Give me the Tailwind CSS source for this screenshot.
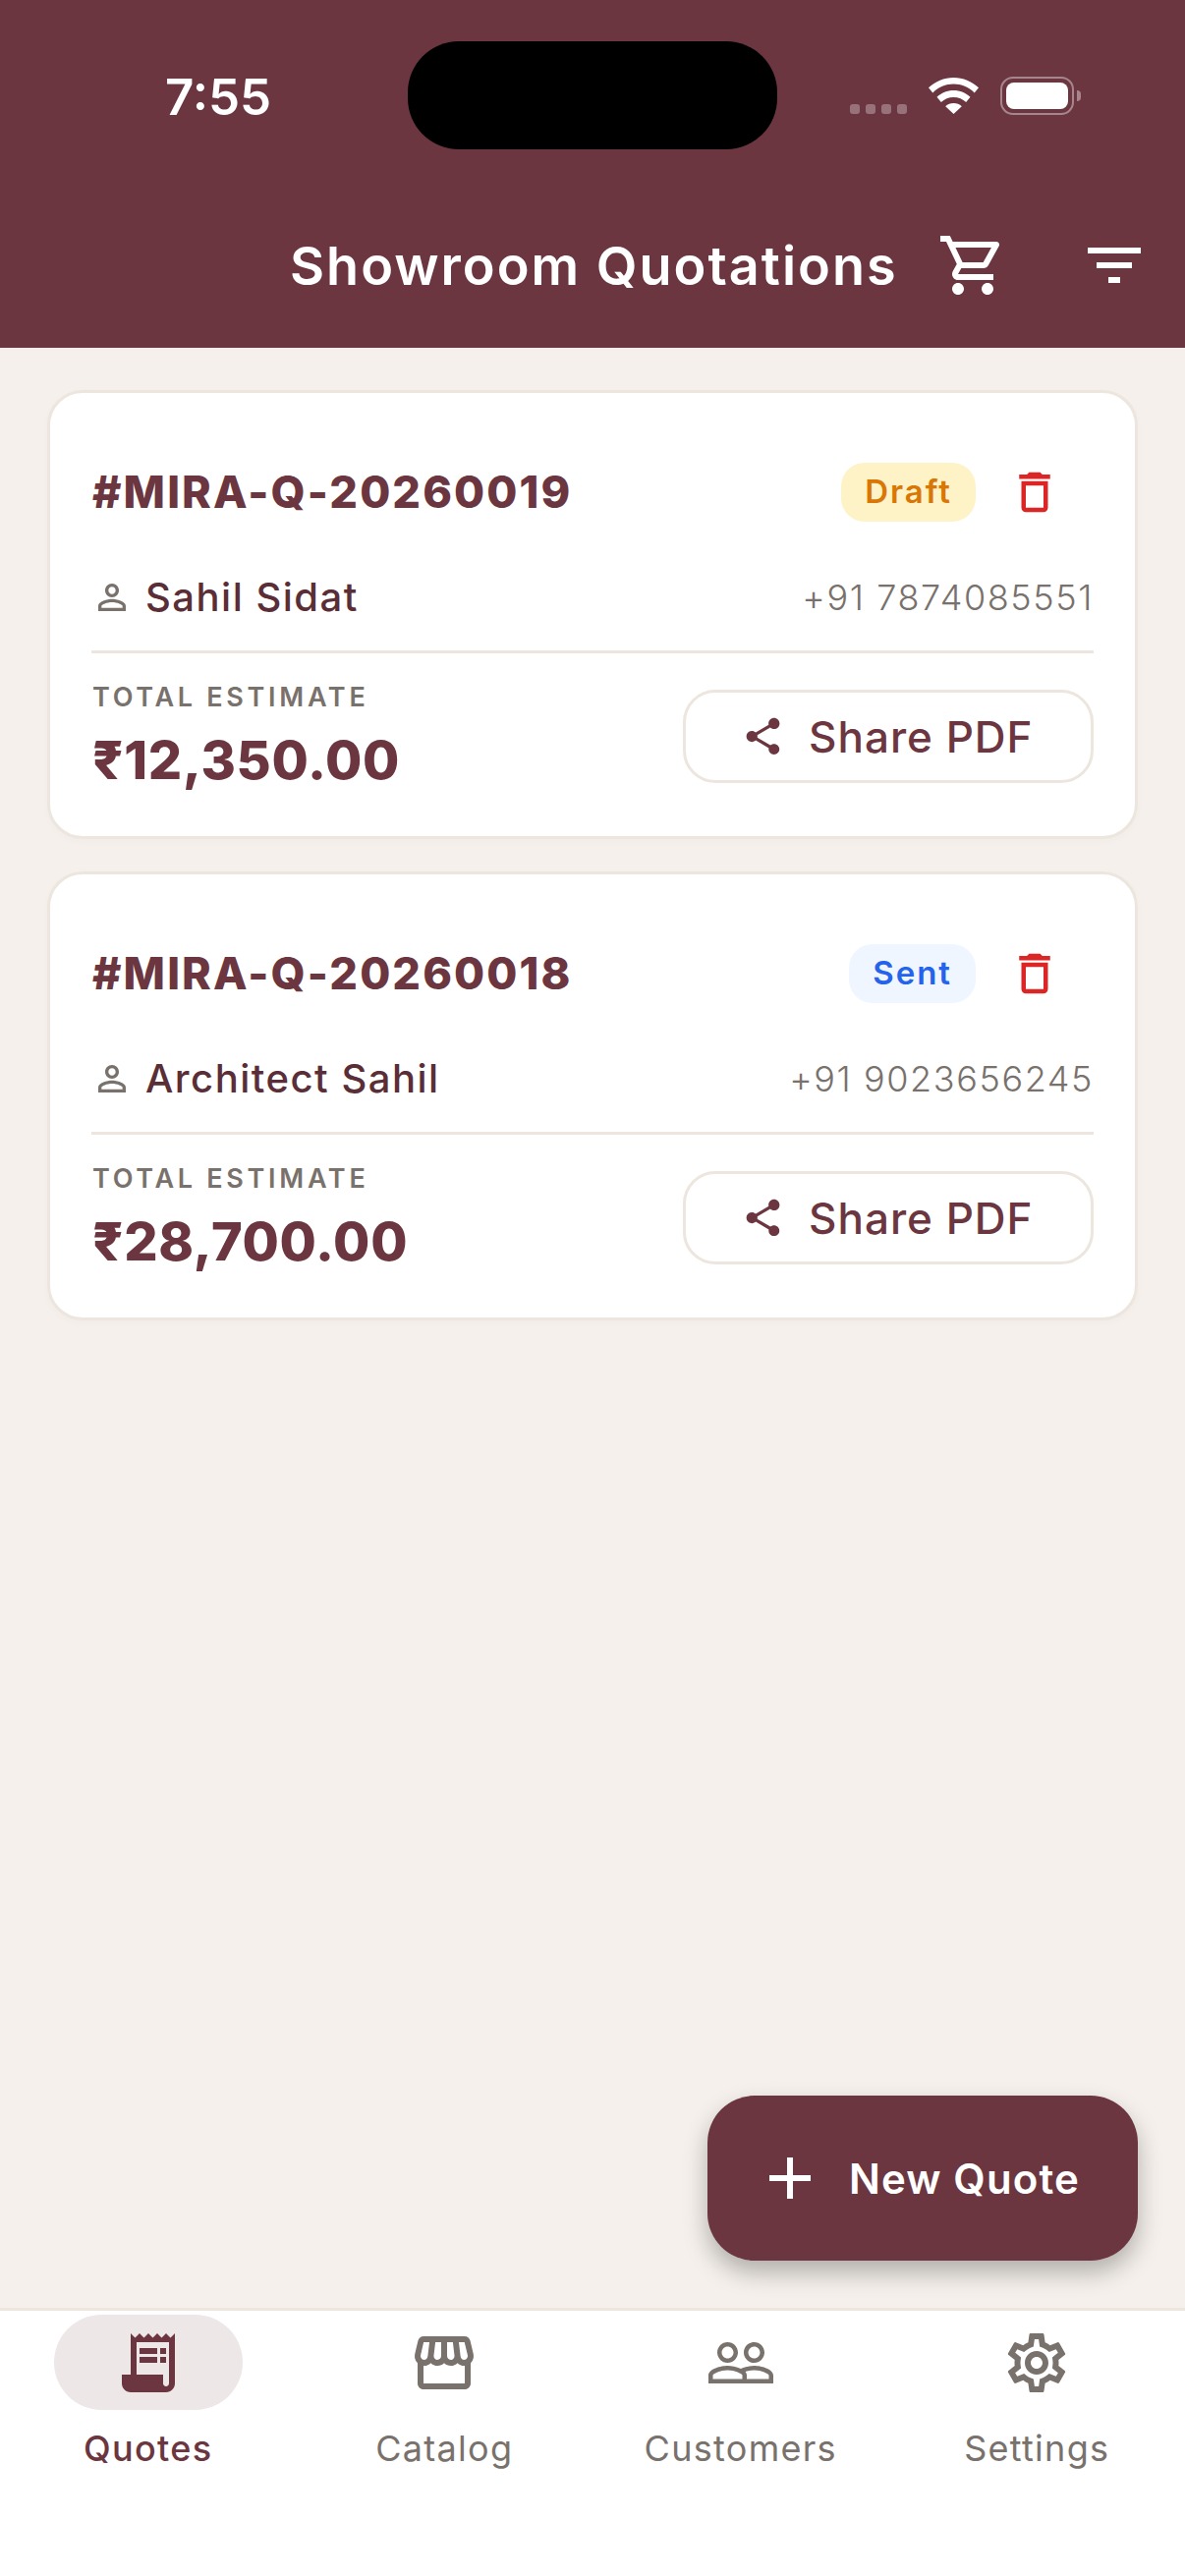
<!DOCTYPE html>
<html lang="en">
<head>
  <meta charset="UTF-8">
  <meta name="viewport" content="width=device-width, initial-scale=1.0">
  <title>Showroom Quotations</title>
  <script src="https://cdn.jsdelivr.net/npm/@tailwindcss/browser@4"></script>
</head>
<body class="bg-[#f5f0eb] font-['Inter',sans-serif]">
  <div class="relative flex flex-col w-[1206px] h-[2622px] overflow-hidden">

    <!-- status bar + app bar -->
    <header class="h-[354px] shrink-0 bg-[#6b3640] text-white">
      <div class="flex h-[234px] items-start">
        <div class="w-[415px] pt-[69px] pl-[168px] text-[51px] leading-[60px] font-semibold">7:55</div>
        <div class="mt-[42px] w-[376px] h-[110px] rounded-[52px] bg-black"></div>
        <div class="flex items-start pt-[78px] pl-[74px]">
          <div class="flex gap-[6px] mt-[28px]">
            <span class="w-[10px] h-[10px] rounded-[3px] bg-white/30"></span>
            <span class="w-[10px] h-[10px] rounded-[3px] bg-white/30"></span>
            <span class="w-[10px] h-[10px] rounded-[3px] bg-white/30"></span>
            <span class="w-[10px] h-[10px] rounded-[3px] bg-white/30"></span>
          </div>
          <svg class="ml-[22px] mt-[1px]" width="51" height="37" viewBox="0 0 51 37" fill="white"><path d="M25.5 0C15.8 0 7 3.8 0 10.2l4.3 5.2C10.2 9.8 17.5 6.6 25.5 6.6s15.300 3.200 21.200 8.800l4.300-5.200C44 3.800 35.200 0 25.500 0z"/><path d="M25.500 13c-6.500 0-12.500 2.500-17 6.700l4.300 5.200c3.300-3.100 7.800-5 12.700-5s9.400 1.900 12.700 5l4.300-5.200c-4.500-4.200-10.500-6.700-17-6.700z"/><path d="M25.500 26c-3.200 0-6.100 1.200-8.300 3.200L25.500 37l8.300-7.800c-2.200-2-5.100-3.200-8.300-3.200z"/></svg>
          <div class="ml-[22px] flex items-center">
            <div class="w-[75px] h-[39px] p-[4px] rounded-[13px] border-2 border-white/40">
              <div class="w-full h-full rounded-[8px] bg-white"></div>
            </div>
            <div class="ml-[3px] w-[4px] h-[11px] rounded-r-full bg-white/40"></div>
          </div>
        </div>
      </div>
      <div class="flex h-[72px] items-center">
        <h1 class="ml-[295px] w-[659px] text-[54px] font-semibold tracking-[2px]">Showroom Quotations</h1>
        <svg class="w-[72px] h-[72px]" viewBox="0 0 24 24" fill="white"><path d="M15.55 13c.75 0 1.41-.41 1.75-1.03l3.58-6.49c.37-.66-.11-1.48-.87-1.48H5.21l-.94-2H1v2h2l3.6 7.59-1.35 2.44C4.52 15.37 5.48 17 7 17h12v-2H7l1.1-2h7.45zM6.16 6h12.15l-2.76 5H8.53L6.16 6zM7 18c-1.1 0-1.99.9-1.99 2S5.900 22 7 22s2-.9 2-2-.9-2-2-2zm10 0c-1.1 0-1.99.9-1.99 2s.89 2 1.99 2 2-.9 2-2-.9-2-2-2z"/></svg>
        <svg class="ml-[72px] w-[72px] h-[72px]" viewBox="0 0 24 24" fill="white"><path d="M10 18h4v-2h-4v2zM3 6v2h18V6H3zm3 7h12v-2H6v2z"/></svg>
      </div>
    </header>

    <!-- quote list -->
    <main class="flex-1 flex flex-col gap-[33px] pt-[43px] pl-[48px] pr-[48px]">

      <article class="h-[457px] rounded-[36px] border-[3px] border-[#ece6de] bg-white pl-[42px] pr-[42px] shadow-[0_3px_9px_rgba(0,0,0,0.02)]">
        <div class="flex items-center h-[60px] mt-[71px]">
          <h2 class="flex-1 pl-[1px] text-[45px] leading-[60px] font-extrabold tracking-[2.1px] text-[#6b3640]">#MIRA-Q-20260019</h2>
          <span class="flex items-center h-[60px] px-[24px] rounded-[24px] bg-[#fef3c7] text-[33px] font-semibold tracking-[2px] text-[#d97706]">Draft</span>
          <svg class="ml-[33px] mr-[33px] w-[54px] h-[54px]" viewBox="0 0 24 24" fill="#dc2626"><path d="M6 19c0 1.1.9 2 2 2h8c1.1 0 2-.9 2-2V7H6v12zM8 9h8v10H8V9zm7.500-5l-1-1h-5l-1 1H5v2h14V4z"/></svg>
        </div>
        <div class="flex items-center h-[42px] mt-[56px]">
          <svg class="w-[42px] h-[42px]" viewBox="0 0 24 24" fill="#78716c"><path d="M12 5.900c1.160 0 2.100.94 2.100 2.100s-.94 2.100-2.100 2.100S9.900 9.160 9.900 8s.94-2.100 2.100-2.100m0 9c2.970 0 6.100 1.460 6.100 2.100v1.100H5.900V17c0-.64 3.130-2.100 6.100-2.100M12 4C9.790 4 8 5.790 8 8s1.790 4 4 4 4-1.790 4-4-1.790-4-4-4zm0 9c-2.670 0-8 1.340-8 4v3h16v-3c0-2.660-5.330-4-8-4z"/></svg>
          <span class="ml-[13px] flex-1 text-[40px] font-medium tracking-[1.5px] text-[#5a2e36]">Sahil Sidat</span>
          <span class="text-[36px] font-light tracking-[1.6px] text-[#78716c]">+91 7874085551</span>
        </div>
        <div class="mt-[33px] h-[3px] bg-[#ece6de]"></div>
        <div class="flex items-start mt-[29px]">
          <div class="flex-1 pl-[1px]">
            <div class="text-[27px] leading-[32px] font-semibold tracking-[3.7px] text-[#78716c]">TOTAL ESTIMATE</div>
            <div class="mt-[16px] text-[54px] leading-[64px] font-extrabold tracking-[.7px] text-[#6b3640]">₹12,350.00</div>
          </div>
          <button class="flex items-center w-[418px] h-[95px] mt-[8px] pl-[56px] rounded-[33px] border-[3px] border-[#ece6de] text-[44px] font-medium tracking-[1px] text-[#6b3640]">
            <svg class="w-[45px] h-[45px] mr-[24px] shrink-0" viewBox="0 0 24 24" fill="#6b3640"><path d="M18 16.080c-.76 0-1.440.3-1.960.77L8.910 12.700c.05-.23.09-.46.09-.7s-.04-.47-.09-.7l7.050-4.110c.54.5 1.250.81 2.040.81 1.660 0 3-1.340 3-3s-1.340-3-3-3-3 1.340-3 3c0 .24.04.47.09.7L8.040 9.810C7.500 9.310 6.790 9 6 9c-1.660 0-3 1.340-3 3s1.340 3 3 3c.79 0 1.500-.31 2.040-.81l7.120 4.160c-.05.21-.08.43-.08.65 0 1.610 1.310 2.920 2.920 2.920 1.610 0 2.920-1.310 2.920-2.920s-1.310-2.920-2.920-2.920z"/></svg>
            Share PDF
          </button>
        </div>
      </article>

      <article class="h-[457px] rounded-[36px] border-[3px] border-[#ece6de] bg-white pl-[42px] pr-[42px] shadow-[0_3px_9px_rgba(0,0,0,0.02)]">
        <div class="flex items-center h-[60px] mt-[71px]">
          <h2 class="flex-1 pl-[1px] text-[45px] leading-[60px] font-extrabold tracking-[2.1px] text-[#6b3640]">#MIRA-Q-20260018</h2>
          <span class="flex items-center h-[60px] px-[24px] rounded-[24px] bg-[#eff6ff] text-[33px] font-semibold tracking-[2px] text-[#2563eb]">Sent</span>
          <svg class="ml-[33px] mr-[33px] w-[54px] h-[54px]" viewBox="0 0 24 24" fill="#dc2626"><path d="M6 19c0 1.1.9 2 2 2h8c1.1 0 2-.9 2-2V7H6v12zM8 9h8v10H8V9zm7.500-5l-1-1h-5l-1 1H5v2h14V4z"/></svg>
        </div>
        <div class="flex items-center h-[42px] mt-[56px]">
          <svg class="w-[42px] h-[42px]" viewBox="0 0 24 24" fill="#78716c"><path d="M12 5.900c1.160 0 2.100.94 2.100 2.100s-.94 2.100-2.100 2.100S9.900 9.160 9.900 8s.94-2.100 2.100-2.100m0 9c2.970 0 6.100 1.460 6.100 2.100v1.100H5.900V17c0-.64 3.130-2.100 6.100-2.100M12 4C9.790 4 8 5.790 8 8s1.790 4 4 4 4-1.790 4-4-1.790-4-4-4zm0 9c-2.670 0-8 1.340-8 4v3h16v-3c0-2.660-5.330-4-8-4z"/></svg>
          <span class="ml-[13px] flex-1 text-[40px] font-medium tracking-[1.5px] text-[#5a2e36]">Architect Sahil</span>
          <span class="text-[36px] font-light tracking-[1.6px] text-[#78716c]">+91 9023656245</span>
        </div>
        <div class="mt-[33px] h-[3px] bg-[#ece6de]"></div>
        <div class="flex items-start mt-[29px]">
          <div class="flex-1 pl-[1px]">
            <div class="text-[27px] leading-[32px] font-semibold tracking-[3.7px] text-[#78716c]">TOTAL ESTIMATE</div>
            <div class="mt-[16px] text-[54px] leading-[64px] font-extrabold tracking-[.7px] text-[#6b3640]">₹28,700.00</div>
          </div>
          <button class="flex items-center w-[418px] h-[95px] mt-[8px] pl-[56px] rounded-[33px] border-[3px] border-[#ece6de] text-[44px] font-medium tracking-[1px] text-[#6b3640]">
            <svg class="w-[45px] h-[45px] mr-[24px] shrink-0" viewBox="0 0 24 24" fill="#6b3640"><path d="M18 16.080c-.76 0-1.440.3-1.960.77L8.910 12.700c.05-.23.09-.46.09-.7s-.04-.47-.09-.7l7.050-4.110c.54.5 1.250.81 2.040.81 1.660 0 3-1.340 3-3s-1.340-3-3-3-3 1.340-3 3c0 .24.04.47.09.7L8.040 9.810C7.500 9.310 6.790 9 6 9c-1.660 0-3 1.340-3 3s1.340 3 3 3c.79 0 1.500-.31 2.040-.81l7.120 4.160c-.05.21-.08.43-.08.65 0 1.610 1.310 2.920 2.920 2.920 1.610 0 2.920-1.310 2.920-2.920s-1.310-2.920-2.920-2.920z"/></svg>
            Share PDF
          </button>
        </div>
      </article>
    </main>

    <!-- floating action button -->
    <button class="absolute left-[720px] top-[2133px] flex items-center w-[438px] h-[168px] pl-[48px] rounded-[48px] bg-[#6b3640] text-[42px] font-semibold tracking-[1.1px] text-white shadow-[0_12px_24px_rgba(0,0,0,0.28)]">
      <svg class="w-[72px] h-[72px] mr-[24px] shrink-0" viewBox="0 0 24 24" fill="white"><path d="M19 13h-6v6h-2v-6H5v-2h6V5h2v6h6v2z"/></svg>
      New Quote
    </button>

    <!-- bottom navigation -->
    <nav class="grid grid-cols-4 h-[273px] shrink-0 border-t-[3px] border-[#ece6de] bg-white text-[36px] tracking-[1.3px] text-[#78716c]">
      <a class="flex flex-col items-center pt-[4px]">
        <span class="flex items-center justify-center w-[192px] h-[97px] rounded-full bg-[#ede7e8]">
          <svg class="w-[72px] h-[72px]" viewBox="0 0 24 24" fill="#6b3640"><path d="M19.500 3.500 18 2l-1.500 1.500L15 2l-1.500 1.500L12 2l-1.500 1.500L9 2 7.500 3.500 6 2v14H3v3c0 1.660 1.340 3 3 3h12c1.660 0 3-1.340 3-3V2l-1.500 1.500zM19 19c0 .55-.45 1-1 1s-1-.45-1-1v-3H8V5h11v14z"/><path d="M9 7h6v2H9zm7 0h2v2h-2zm-7 3h6v2H9zm7 0h2v2h-2z"/></svg>
        </span>
        <span class="mt-[12px] font-medium text-[#6b3640]">Quotes</span>
      </a>
      <a class="flex flex-col items-center pt-[4px]">
        <span class="flex items-center justify-center h-[97px]">
          <svg class="w-[72px] h-[72px]" viewBox="0 0 24 24" fill="#78716c"><path d="M21.900 8.890l-1.050-4.370c-.22-.9-1-1.520-1.910-1.520H5.050c-.9 0-1.690.63-1.900 1.520L2.100 8.890c-.24 1.020-.02 2.060.62 2.880.08.11.19.19.28.29V19c0 1.100.9 2 2 2h14c1.100 0 2-.9 2-2v-6.940c.09-.09.2-.18.28-.28.64-.82.87-1.870.62-2.890zm-2.990-3.900l1.050 4.370c.1.42.01.84-.25 1.170-.14.18-.44.47-.94.47-.61 0-1.140-.49-1.210-1.140L16.980 5l1.930-.01zM13 5h1.960l.54 4.520c.05.39-.07.78-.33 1.070-.22.26-.54.41-.95.41-.67 0-1.220-.59-1.220-1.310V5zM8.490 9.520L9.040 5H11v4.690c0 .72-.55 1.310-1.290 1.310-.34 0-.65-.15-.89-.41-.25-.29-.37-.68-.33-1.070zm-4.450-.16L5.050 5h1.970l-.58 4.860c-.08.65-.6 1.140-1.210 1.140-.49 0-.8-.29-.93-.47-.27-.32-.36-.75-.26-1.170zM5 19v-6.030c.08.01.15.03.23.03.87 0 1.660-.36 2.240-.95.6.6 1.400.95 2.310.95.87 0 1.650-.36 2.230-.93.59.57 1.390.93 2.290.93.84 0 1.640-.35 2.240-.95.58.59 1.370.95 2.240.95.08 0 .15-.02.23-.03V19H5z"/></svg>
        </span>
        <span class="mt-[12px]">Catalog</span>
      </a>
      <a class="flex flex-col items-center pt-[4px]">
        <span class="flex items-center justify-center h-[97px]">
          <svg class="w-[72px] h-[72px]" viewBox="0 0 24 24" fill="#78716c"><path d="M16.500 13c-1.200 0-3.070.34-4.500 1-1.430-.67-3.300-1-4.500-1C5.330 13 1 14.080 1 16.250V19h22v-2.750c0-2.170-4.330-3.250-6.500-3.250zm-4 4.500h-10v-1.250c0-.54 2.560-1.750 5-1.750s5 1.210 5 1.750v1.250zm9 0H14v-1.250c0-.46-.2-.86-.52-1.220.88-.3 1.960-.53 3.020-.53 2.440 0 5 1.210 5 1.750v1.250zM7.500 12c1.930 0 3.500-1.570 3.500-3.500S9.430 5 7.500 5 4 6.570 4 8.500 5.570 12 7.500 12zm0-5.500c1.100 0 2 .9 2 2s-.9 2-2 2-2-.9-2-2 .9-2 2-2zm9 5.500c1.930 0 3.500-1.570 3.500-3.500S18.430 5 16.500 5 13 6.570 13 8.500s1.570 3.500 3.500 3.500zm0-5.500c1.100 0 2 .9 2 2s-.9 2-2 2-2-.9-2-2 .9-2 2-2z"/></svg>
        </span>
        <span class="mt-[12px]">Customers</span>
      </a>
      <a class="flex flex-col items-center pt-[4px]">
        <span class="flex items-center justify-center h-[97px]">
          <svg class="w-[72px] h-[72px]" viewBox="0 0 24 24" fill="#78716c"><path d="M19.430 12.980c.04-.32.07-.64.07-.98 0-.34-.03-.66-.07-.98l2.110-1.650c.19-.15.24-.42.12-.64l-2-3.460c-.09-.16-.26-.25-.44-.25-.06 0-.12.01-.17.03l-2.490 1c-.52-.4-1.080-.73-1.690-.98l-.38-2.650C14.460 2.180 14.250 2 14 2h-4c-.25 0-.46.18-.49.42l-.38 2.650c-.61.25-1.170.59-1.690.98l-2.490-1c-.06-.02-.12-.03-.18-.03-.17 0-.34.09-.43.25l-2 3.460c-.13.22-.07.49.12.64l2.110 1.650c-.04.32-.07.65-.07.98 0 .33.03.66.07.98l-2.110 1.650c-.19.15-.24.42-.12.64l2 3.460c.09.16.26.25.44.25.06 0 .12-.01.17-.03l2.490-1c.52.4 1.080.73 1.690.98l.38 2.650c.03.24.24.42.49.42h4c.25 0 .46-.18.49-.42l.38-2.650c.61-.25 1.170-.59 1.690-.98l2.490 1c.06.02.12.03.18.03.17 0 .34-.09.43-.25l2-3.460c.12-.22.07-.49-.12-.64l-2.110-1.650zm-1.980-1.710c.04.31.05.52.05.73 0 .21-.02.43-.05.73l-.14 1.130.89.7 1.080.84-.7 1.210-1.270-.51-1.040-.42-.9.68c-.43.32-.84.56-1.250.73l-1.060.43-.16 1.130-.2 1.350h-1.400l-.19-1.350-.16-1.130-1.060-.43c-.43-.18-.83-.41-1.230-.71l-.91-.7-1.060.43-1.270.51-.7-1.210 1.080-.84.89-.7-.14-1.130c-.03-.31-.05-.54-.05-.74s.02-.43.05-.73l.14-1.130-.89-.7-1.080-.84.7-1.210 1.270.51 1.040.42.9-.68c.43-.32.84-.56 1.250-.73l1.060-.43.16-1.130.2-1.350h1.390l.19 1.350.16 1.130 1.060.43c.43.18.83.41 1.230.71l.91.7 1.060-.43 1.270-.51.7 1.210-1.070.85-.89.7.14 1.130zM12 8c-2.210 0-4 1.790-4 4s1.790 4 4 4 4-1.790 4-4-1.790-4-4-4zm0 6c-1.100 0-2-.9-2-2s.9-2 2-2 2 .9 2 2-.9 2-2 2z"/></svg>
        </span>
        <span class="mt-[12px]">Settings</span>
      </a>
    </nav>
  </div>
</body>
</html>
